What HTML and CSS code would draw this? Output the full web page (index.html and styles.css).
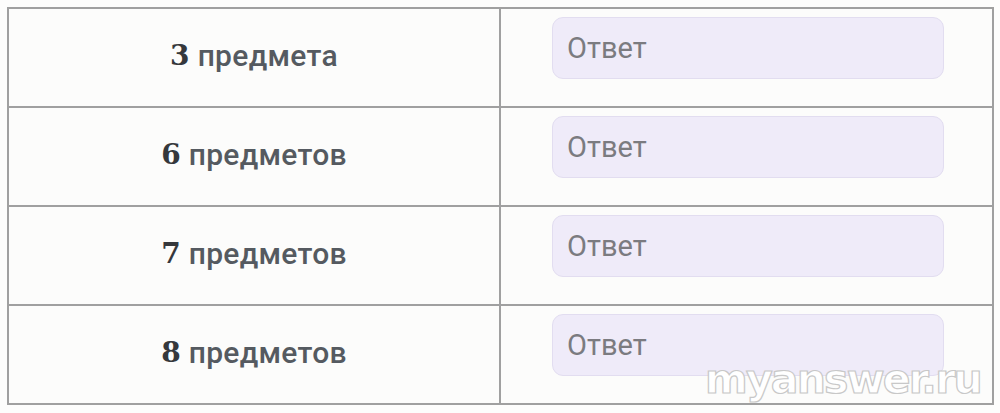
FILE: index.html
```html
<!DOCTYPE html>
<html lang="ru">
<head>
<meta charset="utf-8">
<link rel="stylesheet" href="styles.css">
</head>
<body>
<div class="page">
  <div class="grid">
    <div class="label"><span class="num">3</span>&nbsp;предмета</div>
    <div class="answer"><div class="field">Ответ</div></div>
    <div class="label"><span class="num">6</span>&nbsp;предметов</div>
    <div class="answer"><div class="field">Ответ</div></div>
    <div class="label"><span class="num">7</span>&nbsp;предметов</div>
    <div class="answer"><div class="field">Ответ</div></div>
    <div class="label last"><span class="num">8</span>&nbsp;предметов</div>
    <div class="answer last"><div class="field">Ответ</div></div>
  </div>
  <div class="watermark">myanswer.ru</div>
</div>
</body>
</html>
```
FILE: styles.css
```css
html, body {
  margin: 0;
  padding: 0;
  background: #fdfdfc;
}
.page {
  position: relative;
  width: 1000px;
  height: 413px;
  padding: 7px 0 0 7px;
  box-sizing: border-box;
}
.grid {
  display: grid;
  grid-template-columns: 492px 1fr;
  grid-template-rows: 99px 99px 99px 97px;
  width: 987px;
  height: 398px;
  box-sizing: border-box;
  border: 2px solid #a0a0a0;
  background: #fcfcfb;
}
.label {
  border-right: 2px solid #a0a0a0;
  border-bottom: 2px solid #a0a0a0;
  display: flex;
  align-items: center;
  justify-content: center;
  padding-bottom: 4px;
  font-family: Roboto, "Liberation Sans", sans-serif;
  font-size: 30px;
  font-weight: 500;
  letter-spacing: 0.3px;
  color: #555a60;
}
.answer {
  border-bottom: 2px solid #a0a0a0;
  padding: 8px 0 0 51px;
}
.last {
  border-bottom: none;
}
.num {
  font-family: "DejaVu Serif", "Liberation Serif", serif;
  font-weight: 700;
  font-size: 28px;
  color: #35383c;
}
.field {
  height: 60px;
  width: 376px;
  border: 1px solid #e2ddf0;
  border-radius: 11px;
  background: #efebf9;
  display: flex;
  align-items: center;
  padding-left: 14px;
  font-family: Roboto, "Liberation Sans", sans-serif;
  font-size: 29px;
  color: #7b7b80;
}
.watermark {
  position: absolute;
  left: 705px;
  top: 355px;
  font-family: "DejaVu Sans", "Liberation Sans", sans-serif;
  font-weight: 700;
  font-size: 41px;
  color: #ffffff;
  -webkit-text-stroke: 1.2px #c8c8c8;
  letter-spacing: -1.8px;
}
```
